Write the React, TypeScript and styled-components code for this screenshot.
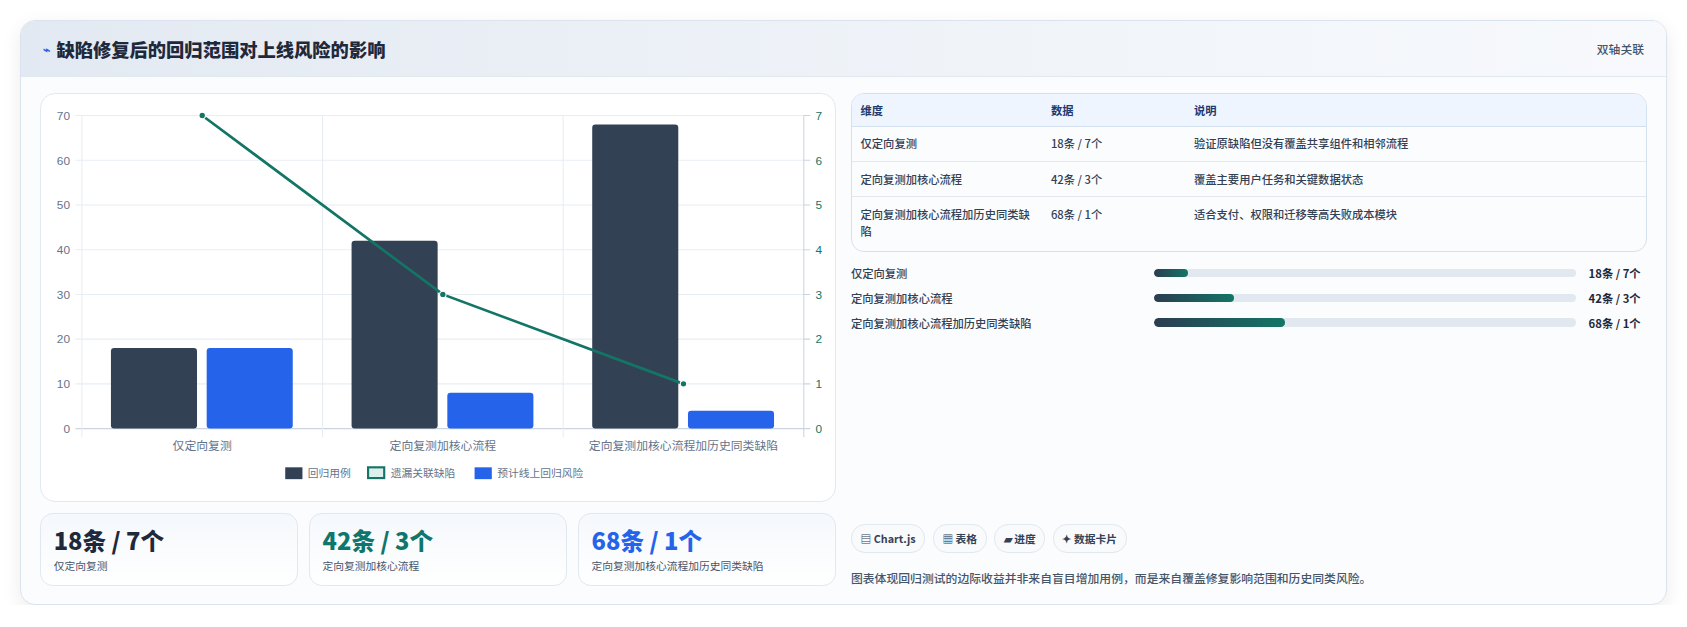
import React from "react";
import styled, { createGlobalStyle } from "styled-components";

const Global = createGlobalStyle`
  body { margin: 0; background: #fff; font-family: "Noto Sans CJK SC", "Noto Sans", sans-serif; }
`;

const Page = styled.div`
  zoom: 1.0759;
  padding: 19px 0 0 19px;
`;

const Card = styled.section`
  width: 1530px;
  height: 543px;
  box-sizing: border-box;
  border: 1px solid #dbe3ee;
  border-radius: 14px;
  background: #fafcfe;
  box-shadow: 0 6px 18px rgba(15, 23, 42, 0.08);
  overflow: hidden;
  display: flex;
  flex-direction: column;
`;

const Header = styled.header`
  height: 51px;
  display: flex;
  align-items: center;
  justify-content: space-between;
  padding: 0 20px 0 20px;
  background: linear-gradient(90deg, #e3e9f2 0%, #f0f4f9 60%, #f7f9fc 100%);
  border-bottom: 1px solid #e2e8f0;
`;

const Title = styled.h2`
  margin: 0;
  font-size: 17px;
  font-weight: 800;
  color: #1e293b;
  display: flex;
  align-items: center;
  gap: 6px;
`;

const Badge = styled.span`
  font-size: 11px;
  color: #475569;
  font-weight: 500;
`;

const Body = styled.div`
  flex: 1;
  display: grid;
  grid-template-columns: 740px 740px;
  gap: 14px;
  padding: 15px 17px 16px 17px;
`;

const Col = styled.div`
  display: flex;
  flex-direction: column;
  gap: 10px;
`;

const ChartBox = styled.div`
  height: 380px;
  box-sizing: border-box;
  border: 1px solid #e2e8f0;
  border-radius: 14px;
  background: #fff;
  overflow: hidden;
`;

const Stats = styled.div`
  display: grid;
  grid-template-columns: repeat(3, 1fr);
  gap: 10px;
`;

const Stat = styled.div`
  height: 68px;
  box-sizing: border-box;
  border: 1px solid #e2e8f0;
  border-radius: 12px;
  background: linear-gradient(180deg, #f5f8fc 0%, #fff 100%);
  padding: 9px 12px;
`;

const StatValue = styled.div<{ $c: string }>`
  font-size: 22px;
  font-weight: 800;
  color: ${(p) => p.$c};
  line-height: 30px;
`;

const StatLabel = styled.div`
  font-size: 10px;
  color: #475569;
  margin-top: 2px;
`;

const Table = styled.table`
  width: 100%;
  border-collapse: separate;
  border-spacing: 0;
  border: 1px solid #d5e0ee;
  border-radius: 12px;
  overflow: hidden;
  font-size: 10.5px;
  color: #334155;
  font-weight: 500;
  th {
    background: #eef5ff;
    color: #1e3a6e;
    text-align: left;
    font-weight: 600;
    height: 29px;
    padding: 0 8px;
    border-bottom: 1px solid #d5e0ee;
  }
  td {
    padding: 8px 8px;
    vertical-align: top;
    line-height: 16px;
    border-bottom: 1px solid #e2e8f0;
  }
  tr:last-child td { border-bottom: 0; padding-bottom: 10px; }
`;

const Progress = styled.div`
  display: flex;
  flex-direction: column;
  gap: 8px;
  margin-top: 2px;
`;

const PRow = styled.div`
  display: grid;
  grid-template-columns: 282px 392px 1fr;
  align-items: center;
  font-size: 10.5px;
  color: #334155;
  font-weight: 500;
  height: 15px;
`;

const Track = styled.div`
  height: 8px;
  border-radius: 4px;
  background: #e2e8f0;
  overflow: hidden;
`;

const Fill = styled.div`
  height: 100%;
  border-radius: 4px;
  background: linear-gradient(90deg, #2b3d52, #137566);
`;

const PVal = styled.span`
  text-align: right;
  font-weight: 600;
  color: #1e293b;
  padding-right: 6px;
`;

const Spacer = styled.div`
  flex: 1;
`;

const Tags = styled.div`
  display: flex;
  gap: 7px;
`;

const Tag = styled.span`
  height: 25px;
  display: inline-flex;
  align-items: center;
  padding: 0 8px;
  border: 1px solid #e2e8f0;
  border-radius: 13px;
  background: #f8fafc;
  font-size: 10px;
  font-weight: 600;
  color: #334155;
`;

const Note = styled.p`
  margin: 5px 0 0;
  font-size: 11px;
  color: #475569;
  font-weight: 500;
`;

const rows = [
  { name: "仅定向复测", data: "18条 / 7个", desc: "验证原缺陷但没有覆盖共享组件和相邻流程", pct: 8 },
  { name: "定向复测加核心流程", data: "42条 / 3个", desc: "覆盖主要用户任务和关键数据状态", pct: 19 },
  { name: "定向复测加核心流程加历史同类缺陷", data: "68条 / 1个", desc: "适合支付、权限和迁移等高失败成本模块", pct: 31 },
];

const Chart: React.FC = () => {
  const left = 75, right = 746, top = 107, bottom = 398;
  const y = (v: number) => bottom - (v / 70) * (bottom - top);
  const y2 = (v: number) => bottom - (v / 7) * (bottom - top);
  const cw = (right - left) / 3;
  const cases = [18, 42, 68];
  const risk = [18, 8, 4];
  const miss = [7, 3, 1];
  const labels = ["仅定向复测", "定向复测加核心流程", "定向复测加核心流程加历史同类缺陷"];
  const pts = miss.map((m, i) => [left + cw * i + cw / 2, y2(m)]);
  return (
    <svg width="740" height="380" viewBox="37 87 740 380" style={{ display: "block" }}>
      {[0, 10, 20, 30, 40, 50, 60, 70].map((v) => (
        <g key={v}>
          <line x1={left - 6} x2={right} y1={y(v)} y2={y(v)} stroke={v === 0 ? "#cbd5e1" : "#e8edf3"} />
          <text x={64} y={y(v) + 4} fontSize="11" fill="#64748b" textAnchor="end" fontFamily="Liberation Sans, sans-serif">{v}</text>
          <line x1={right} x2={right + 6} y1={y(v)} y2={y(v)} stroke="#cbd5e1" />
          <text x={757} y={y(v) + 4} fontSize="11" fill="#137566" fontFamily="Liberation Sans, sans-serif">{v / 10}</text>
        </g>
      ))}
      {[0, 1, 2, 3].map((i) => (
        <line key={i} x1={left + cw * i} x2={left + cw * i} y1={top} y2={bottom + 8} stroke={i === 3 ? "#cbd5e1" : "#e8edf3"} />
      ))}
      {cases.map((c, i) => {
        const x0 = left + cw * i;
        return (
          <g key={i}>
            <rect x={x0 + 27} y={y(c)} width={80} height={bottom - y(c)} rx="3" fill="#334155" />
            <rect x={x0 + 116} y={y(risk[i])} width={80} height={bottom - y(risk[i])} rx="3" fill="#2563eb" />
            <text x={x0 + cw / 2} y={418} fontSize="11" fill="#64748b" textAnchor="middle">{labels[i]}</text>
          </g>
        );
      })}
      <polyline points={pts.map((p) => p.join(",")).join(" ")} fill="none" stroke="#137566" strokeWidth="2.5" />
      {pts.map((p, i) => (
        <circle key={i} cx={p[0]} cy={p[1]} r="3" fill="#137566" stroke="#fff" strokeWidth="1" />
      ))}
      <g fontSize="10" fill="#64748b">
        <rect x={264} y={434} width={16} height={11} fill="#334155" />
        <text x={285} y={443}>回归用例</text>
        <rect x={341} y={434} width={15} height={10} fill="#dcefeb" stroke="#137566" strokeWidth="2" />
        <text x={362} y={443}>遗漏关联缺陷</text>
        <rect x={440} y={434} width={16} height={11} fill="#2563eb" />
        <text x={461} y={443}>预计线上回归风险</text>
      </g>
    </svg>
  );
};

const App: React.FC = () => (
  <>
    <Global />
    <Page>
      <Card>
        <Header>
          <Title>
            <span style={{ color: "#2563eb", fontSize: 11 }}>⌁</span>缺陷修复后的回归范围对上线风险的影响
          </Title>
          <Badge>双轴关联</Badge>
        </Header>
        <Body>
          <Col>
            <ChartBox>
              <Chart />
            </ChartBox>
            <Stats>
              <Stat>
                <StatValue $c="#1e293b">18条 / 7个</StatValue>
                <StatLabel>仅定向复测</StatLabel>
              </Stat>
              <Stat>
                <StatValue $c="#0f766e">42条 / 3个</StatValue>
                <StatLabel>定向复测加核心流程</StatLabel>
              </Stat>
              <Stat>
                <StatValue $c="#2563eb">68条 / 1个</StatValue>
                <StatLabel>定向复测加核心流程加历史同类缺陷</StatLabel>
              </Stat>
            </Stats>
          </Col>
          <Col>
            <Table>
              <thead>
                <tr>
                  <th style={{ width: 161 }}>维度</th>
                  <th style={{ width: 117 }}>数据</th>
                  <th>说明</th>
                </tr>
              </thead>
              <tbody>
                {rows.map((r) => (
                  <tr key={r.name}>
                    <td>{r.name}</td>
                    <td>{r.data}</td>
                    <td>{r.desc}</td>
                  </tr>
                ))}
              </tbody>
            </Table>
            <Progress>
              {rows.map((r) => (
                <PRow key={r.name}>
                  <span>{r.name}</span>
                  <Track>
                    <Fill style={{ width: `${r.pct}%` }} />
                  </Track>
                  <PVal>{r.data}</PVal>
                </PRow>
              ))}
            </Progress>
            <Spacer />
            <Tags>
              <Tag>▤ Chart.js</Tag>
              <Tag>▦ 表格</Tag>
              <Tag>▰ 进度</Tag>
              <Tag>✦ 数据卡片</Tag>
            </Tags>
            <Note>图表体现回归测试的边际收益并非来自盲目增加用例，而是来自覆盖修复影响范围和历史同类风险。</Note>
          </Col>
        </Body>
      </Card>
    </Page>
  </>
);

export default App;
